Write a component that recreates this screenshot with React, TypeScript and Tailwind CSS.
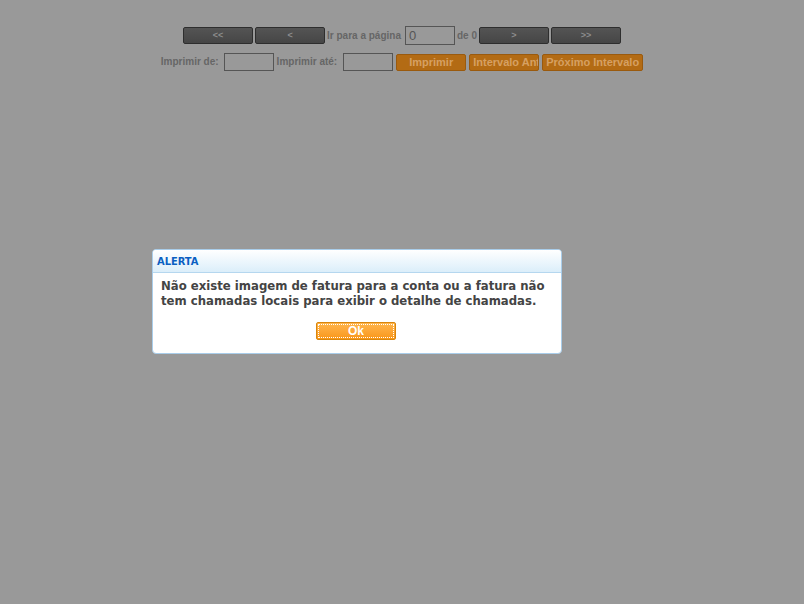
import React from 'react';

const darkBtn =
  'w-[70px] h-[17px] rounded-[2px] border border-[#2e2e2e] bg-gradient-to-b from-[#545454] to-[#464646] text-[#8c8c8c] text-[9px] font-bold leading-none flex items-center justify-center';
const orangeBtn =
  'h-[17px] rounded-[2px] border border-[#9a5a0e] bg-[#b36b14] text-[#d6a062] text-[11px] font-bold leading-none flex items-center overflow-hidden whitespace-nowrap';
const label = 'text-[10px] font-bold text-[#666666] leading-none';
const box = 'w-[50px] border border-[#555555] bg-[#999999] text-[13px] text-[#555555] px-[3px]';

export default function App() {
  return (
    <div className="relative w-full h-[604px] bg-[#999999] overflow-hidden" style={{ fontFamily: '"Liberation Sans", Arial, sans-serif' }}>
      {/* paginação */}
      <div className="pt-[26px] flex flex-col items-center">
        <div className="flex items-center h-[19px]">
          <button className={darkBtn}>&lt;&lt;</button>
          <button className={darkBtn + ' ml-[2px]'}>&lt;</button>
          <span className={label + ' ml-[2px]'}>Ir para a página</span>
          <div className={box + ' ml-[4px] h-[19px] leading-[17px]'}>0</div>
          <span className={label + ' ml-[2px]'}>de 0</span>
          <button className={darkBtn + ' ml-[2px]'}>&gt;</button>
          <button className={darkBtn + ' ml-[2px]'}>&gt;&gt;</button>
        </div>
        <div className="flex items-center h-[18px] mt-[8px]">
          <span className={label}>Imprimir de:</span>
          <div className={box + ' ml-[5px] h-[18px]'}></div>
          <span className={label + ' ml-[3px]'}>Imprimir até:</span>
          <div className={box + ' ml-[6px] h-[18px]'}></div>
          <button className={orangeBtn + ' w-[70px] justify-center ml-[3px]'}>Imprimir</button>
          <button className={orangeBtn + ' w-[70px] justify-start pl-[3px] ml-[3px]'}>Intervalo Anterior</button>
          <button className={orangeBtn + ' w-[101px] justify-center ml-[3px]'}>Próximo Intervalo</button>
        </div>
      </div>

      {/* alerta */}
      <div className="absolute left-[152px] top-[249px] w-[410px] h-[105px] rounded-[4px] border border-[#a9cdea] bg-white overflow-hidden">
        <div className="h-[23px] bg-gradient-to-b from-white to-[#dbeefa] border-b border-[#b5d7ef] flex items-center px-[4px]">
          <span
            className="text-[11px] font-bold text-[#0a5fc2] leading-none"
            style={{ fontFamily: '"DejaVu Sans Condensed", "DejaVu Sans", sans-serif', fontStretch: 'condensed' }}
          >
            ALERTA
          </span>
        </div>
        <p
          className="px-[8px] pt-[5px] text-[13px] font-bold leading-[15px] text-[#444444]"
          style={{ fontFamily: '"DejaVu Sans Condensed", "DejaVu Sans", sans-serif', fontStretch: 'condensed' }}
        >
          Não existe imagem de fatura para a conta ou a fatura não tem chamadas locais para exibir o detalhe de chamadas.
        </p>
        <div className="flex justify-center mt-[14px] pr-[2px]">
          <button className="w-[80px] h-[18px] rounded-[2px] border border-[#d9860c] bg-gradient-to-b from-[#ffb54a] to-[#f99716] p-[1px]">
            <div className="h-full border border-dotted border-white flex items-center justify-center text-[12px] font-bold text-white leading-none">
              Ok
            </div>
          </button>
        </div>
      </div>
    </div>
  );
}
